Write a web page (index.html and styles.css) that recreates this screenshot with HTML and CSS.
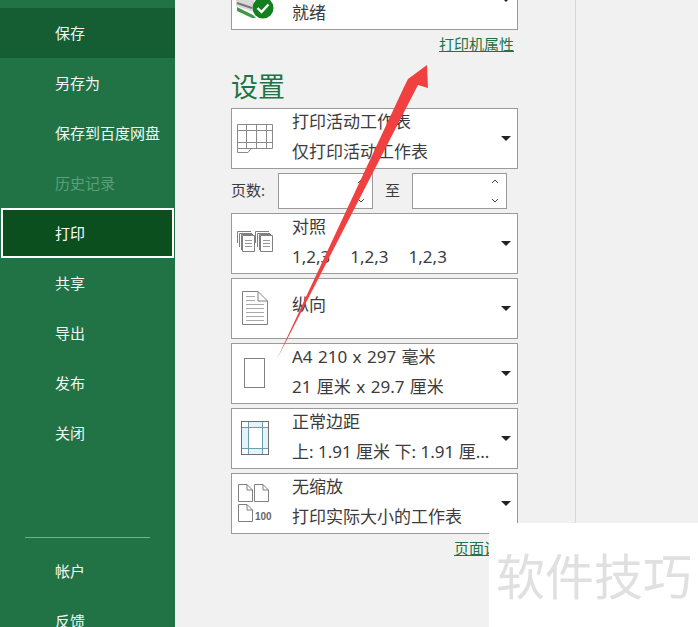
FILE: index.html
```html
<!DOCTYPE html>
<html lang="zh-CN">
<head>
    <meta charset="UTF-8">
    <meta name="viewport" content="width=device-width, initial-scale=1.0">
    <title>打印</title>
    <link rel="stylesheet" href="styles.css">
</head>
<body>

    <!-- 左侧菜单 -->
    <nav class="sidebar">
        <a class="nav-item saved">保存</a>
        <a class="nav-item">另存为</a>
        <a class="nav-item">保存到百度网盘</a>
        <a class="nav-item disabled">历史记录</a>
        <a class="nav-item active">打印</a>
        <a class="nav-item">共享</a>
        <a class="nav-item">导出</a>
        <a class="nav-item">发布</a>
        <a class="nav-item">关闭</a>
        <div class="nav-divider"></div>
        <a class="nav-item">帐户</a>
        <a class="nav-item">反馈</a>
    </nav>

    <main class="settings">
        <!-- 打印机 -->
        <div class="select printer">
            <svg class="select-icon" viewBox="0 0 60 58">
                <path d="M4 30 L22 30 L22 42 L4 36 Z" fill="#d8d8d8"/>
                <path d="M5 37 L21 45 L24 48 L20 48 L5 41 Z" fill="#3f9a46"/>
                <path d="M5 33 L20 38" stroke="#777" stroke-width="2"/>
                <circle cx="31" cy="38" r="10.5" fill="#12801f"/>
                <path d="M25.5 38 L29.5 42 L36.5 34.5" fill="none" stroke="#fff" stroke-width="2.4"/>
            </svg>
            <div class="select-text">
                <div>&nbsp;</div>
                <div>就绪</div>
            </div>
            <span class="caret"></span>
        </div>
        <div class="link-row"><a class="link">打印机属性</a></div>

        <h2 class="title">设置</h2>

        <div class="select">
            <svg class="select-icon" viewBox="0 0 60 58">
                <path d="M5.5 39.5 V15.5 H40.5 V39.5 H19 L16 43.5 H5.5 Z M5.5 39.5 H19 M14.5 15.5 V39.5 M24.5 15.5 V39.5 M34.5 15.5 V39.5 M5.5 21.5 H40.5 M5.5 33.5 H40.5" fill="#fff" stroke="#8a8a8a"/>
            </svg>
            <div class="select-text">
                <div>打印活动工作表</div>
                <div>仅打印活动工作表</div>
            </div>
            <span class="caret"></span>
        </div>

        <div class="pages">
            <span class="pages-label">页数:</span>
            <div class="spin">
                <svg class="spin-arrows" viewBox="0 0 10 28">
                    <path d="M2 6 L5 3 L8 6 M2 22 L5 25 L8 22" fill="none" stroke="#444"/>
                </svg>
            </div>
            <span class="pages-to">至</span>
            <div class="spin">
                <svg class="spin-arrows" viewBox="0 0 10 28">
                    <path d="M2 6 L5 3 L8 6 M2 22 L5 25 L8 22" fill="none" stroke="#444"/>
                </svg>
            </div>
        </div>

        <div class="select">
            <svg class="select-icon" viewBox="0 0 60 58">
                <g id="collate" fill="#fff" stroke="#808080">
                    <path d="M5.5 29 V17.5 H19"/>
                    <path d="M7.5 33 V19.5 H20"/>
                    <path d="M9.5 36 V20.5 H21"/>
                    <path d="M10.5 21.5 H22.5 V37.5 H10.5 Z"/>
                    <path d="M13 26.5 H20 M13 29.5 H20 M13 32.5 H20" stroke="#999"/>
                </g>
                <use href="#collate" x="18"/>
            </svg>
            <div class="select-text">
                <div>对照</div>
                <div class="collate-nums"><span>1,2,3</span><span>1,2,3</span><span>1,2,3</span></div>
            </div>
            <span class="caret"></span>
        </div>

        <div class="select">
            <svg class="select-icon" viewBox="0 0 60 58">
                <path d="M10.5 12.5 H26 L35.5 22 V45.5 H10.5 Z M26 12.5 V22 H35.5" fill="#fff" stroke="#808080"/>
                <path d="M14 17.5 H23 M14 21.5 H23 M14 25.5 H32 M14 29.5 H32 M14 33.5 H32 M14 37.5 H32 M14 41.5 H32" stroke="#aaa"/>
            </svg>
            <div class="select-text single">
                <div>纵向</div>
            </div>
            <span class="caret"></span>
        </div>

        <div class="select">
            <svg class="select-icon" viewBox="0 0 60 58">
                <rect x="12.5" y="14.5" width="20" height="29" fill="#fff" stroke="#808080"/>
            </svg>
            <div class="select-text wide">
                <div>A4 210 x 297 毫米</div>
                <div>21 厘米 x 29.7 厘米</div>
            </div>
            <span class="caret"></span>
        </div>

        <div class="select">
            <svg class="select-icon" viewBox="0 0 60 58">
                <path d="M9.5 18.5 H16 V12.5 H30 V18.5 H36 V39 H30 V45.5 H16 V39 H9.5 Z" fill="#e4f3f8"/>
                <rect x="16" y="18" width="14" height="21" fill="#fff"/>
                <path d="M16.5 12.5 V45.5 M30.5 12.5 V45.5 M9.5 18.5 H36.5 M9.5 39.5 H36.5" stroke="#6a9fb0" fill="none"/>
                <rect x="9.5" y="12.5" width="27" height="33" fill="none" stroke="#707070"/>
            </svg>
            <div class="select-text">
                <div>正常边距</div>
                <div>上: 1.91 厘米 下: 1.91 厘...</div>
            </div>
            <span class="caret"></span>
        </div>

        <div class="select">
            <svg class="select-icon" viewBox="0 0 60 58">
                <path id="sheet" d="M6.5 10.5 H15 L20.5 16 V27.5 H6.5 Z M15 10.5 V16 H20.5" fill="#fff" stroke="#808080"/>
                <use href="#sheet" x="16"/>
                <use href="#sheet" y="20"/>
                <text class="scale-num" x="23" y="46">100</text>
            </svg>
            <div class="select-text">
                <div>无缩放</div>
                <div>打印实际大小的工作表</div>
            </div>
            <span class="caret"></span>
        </div>
        <div class="link-row bottom"><a class="link">页面设置</a></div>
    </main>

    <div class="preview"></div>

    <!-- 截图上的标注 -->
    <svg class="arrow" viewBox="0 0 698 627">
        <path d="M277 359 L404 87 L408 79 L427 65 L428 88 L418 85 Z" fill="#f04040"/>
    </svg>
    <div class="watermark">软件技巧</div>

</body>
</html>
```

FILE: styles.css
```css
body {
    margin: 0;
    padding: 0;
    height: 627px;
    overflow: hidden;
    display: flex;
    background-color: #f1f1f1;
    font-family: "Noto Sans", "Noto Sans CJK SC", sans-serif;
    color: #3c3c3c;
}

.sidebar {
    width: 175px;
    height: 627px;
    flex-shrink: 0;
    padding-top: 8px;
    box-sizing: border-box;
    background-color: #217346;
    overflow: hidden;
}

.nav-item {
    display: block;
    height: 50px;
    padding-left: 55px;
    box-sizing: border-box;
    line-height: 50px;
    font-size: 15px;
    color: #f2f7f4;
}

.nav-item.saved {
    background-color: #155d32;
}

.nav-item.disabled {
    color: #5ba079;
}

.nav-item.active {
    margin: 0 1px;
    padding-left: 52px;
    line-height: 46px;
    border: 2px solid #ffffff;
    background-color: #0b4f1f;
    color: #ffffff;
}

.nav-divider {
    height: 1px;
    margin: 79px 25px 8px;
    background-color: #6db38d;
}

.settings {
    width: 287px;
    margin-left: 56px;
    flex-shrink: 0;
}

.select {
    display: flex;
    height: 61px;
    margin-bottom: 4px;
    box-sizing: border-box;
    border: 1px solid #9a9a9a;
    background-color: #ffffff;
    position: relative;
}

.select.printer {
    margin-top: -31px;
    margin-bottom: 0;
}

.select-icon {
    width: 60px;
    height: 58px;
    flex-shrink: 0;
}

.select-text {
    margin-top: -2px;
    font-size: 17px;
    line-height: 30px;
    white-space: nowrap;
}

.select-text.single {
    padding-top: 13px;
}

.select-text.wide {
    word-spacing: 1px;
}

.collate-nums {
    display: flex;
    gap: 20px;
}

.caret {
    position: absolute;
    right: 6px;
    top: 27px;
    border-left: 5px solid transparent;
    border-right: 5px solid transparent;
    border-top: 5px solid #222222;
}

.scale-num {
    font-family: "Liberation Sans", sans-serif;
    font-size: 10px;
    font-weight: bold;
    fill: #666666;
}

.link-row {
    margin-top: 3px;
    padding-right: 4px;
    text-align: right;
    line-height: 22px;
}

.link-row.bottom {
    margin-top: -1px;
}

.link {
    font-size: 15px;
    color: #217346;
    text-decoration: underline;
}

.title {
    margin: 13px 0 2px;
    font-size: 27px;
    font-weight: 400;
    line-height: 38px;
    color: #217346;
}

.pages {
    display: flex;
    align-items: center;
    height: 36px;
    margin: 1px 0 4px;
    font-size: 15px;
}

.pages-label {
    width: 47px;
    padding-bottom: 4px;
}

.pages-to {
    width: 39px;
    padding-bottom: 4px;
    text-align: center;
}

.spin {
    display: flex;
    justify-content: flex-end;
    align-items: center;
    width: 95px;
    height: 36px;
    padding-right: 6px;
    box-sizing: border-box;
    border: 1px solid #9a9a9a;
    background-color: #ffffff;
}

.spin-arrows {
    width: 10px;
    height: 28px;
}

.preview {
    flex: 1;
    margin-left: 57px;
    border-left: 1px solid #d6d6d6;
}

.arrow {
    position: absolute;
    left: 0;
    top: 0;
    width: 698px;
    height: 627px;
}

.watermark {
    position: absolute;
    left: 489px;
    top: 523px;
    width: 209px;
    height: 104px;
    padding-left: 7px;
    box-sizing: border-box;
    background-color: #ffffff;
    font-family: "Noto Sans CJK SC", sans-serif;
    font-size: 49px;
    line-height: 102px;
    color: #e0e0e0;
    white-space: nowrap;
}
```
